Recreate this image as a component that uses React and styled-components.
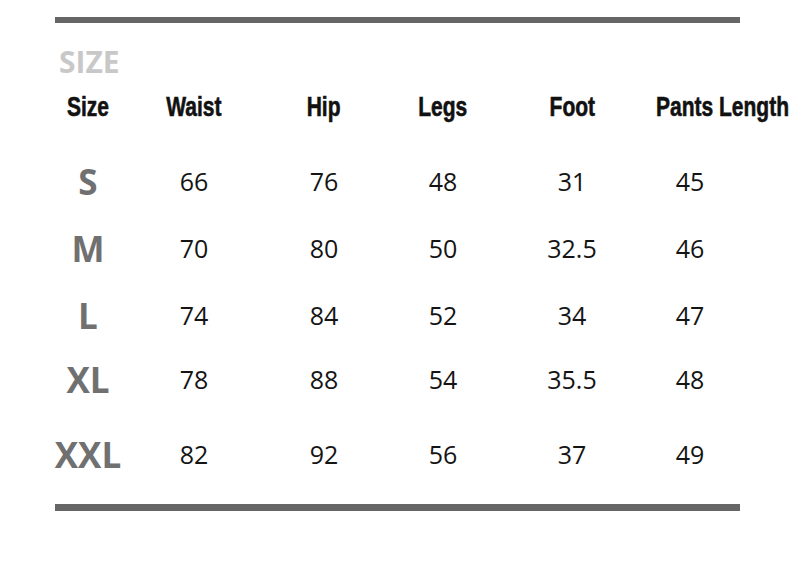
import React from 'react';
import styled, { createGlobalStyle } from 'styled-components';

const GlobalStyle = createGlobalStyle`
    html, body {
        margin: 0;
        padding: 0;
        background: #ffffff;
    }
`;

const columns = ['Size', 'Waist', 'Hip', 'Legs', 'Foot', 'Pants Length'];

// top margin of each row keeps the uneven spacing of the original chart
const rows = [
    { size: 'S', values: ['66', '76', '48', '31', '45'], mt: 34 },
    { size: 'M', values: ['70', '80', '50', '32.5', '46'], mt: 27 },
    { size: 'L', values: ['74', '84', '52', '34', '47'], mt: 27 },
    { size: 'XL', values: ['78', '88', '54', '35.5', '48'], mt: 24 },
    { size: 'XXL', values: ['82', '92', '56', '37', '49'], mt: 35 },
];

const Sheet = styled.div`
    width: 790px;
    height: 575px;
    padding-top: 17px;
    box-sizing: border-box;
    overflow: hidden;
    background: #ffffff;
`;

const Bar = styled.div`
    width: 685px;
    height: ${p => p.$h}px;
    margin: ${p => p.$mt}px 0 0 55px;
    background: #666666;
`;

const Title = styled.div`
    margin: 24px 0 0 59px;
    font-family: 'Open Sans', 'Noto Sans', sans-serif;
    font-weight: 700;
    font-size: 30px;
    line-height: 30px;
    color: #c8c8c8;
`;

const Row = styled.div`
    display: grid;
    grid-template-columns: 100px 112px 148px 90px 168px 68px;
    align-items: center;
    height: 40px;
    margin: ${p => p.$mt}px 0 0 38px;
`;

// no condensed face is installed, so the bold sans is narrowed by hand
const Head = styled.div`
    justify-self: ${p => (p.$start ? 'start' : 'center')};
    white-space: nowrap;
    font-family: 'Liberation Sans', Arial, sans-serif;
    font-weight: 700;
    font-size: 28px;
    line-height: 1;
    color: #111111;
    -webkit-text-stroke: 0.6px #111111;
    transform: scaleX(0.75);
    transform-origin: ${p => (p.$start ? 'left' : 'center')} center;
`;

const SizeCell = styled.div`
    justify-self: center;
    font-family: 'Open Sans', 'Noto Sans', sans-serif;
    font-weight: 700;
    font-size: 35px;
    line-height: 1;
    color: #707070;
`;

const Value = styled.div`
    justify-self: center;
    white-space: nowrap;
    font-family: 'Open Sans', 'Noto Sans', sans-serif;
    font-size: 25px;
    line-height: 1;
    color: #141414;
`;

function App() {
    return (
        <Sheet>
            <GlobalStyle />
            <Bar $h={6} $mt={0} />
            <Title>SIZE</Title>
            <Row $mt={10}>
                {columns.map((c, i) => (
                    <Head key={c} $start={i === columns.length - 1}>
                        {c}
                    </Head>
                ))}
            </Row>
            {rows.map(r => (
                <Row key={r.size} $mt={r.mt}>
                    <SizeCell>{r.size}</SizeCell>
                    {r.values.map((v, i) => (
                        <Value key={i}>{v}</Value>
                    ))}
                </Row>
            ))}
            <Bar $h={7} $mt={30} />
        </Sheet>
    );
}

export default App;
